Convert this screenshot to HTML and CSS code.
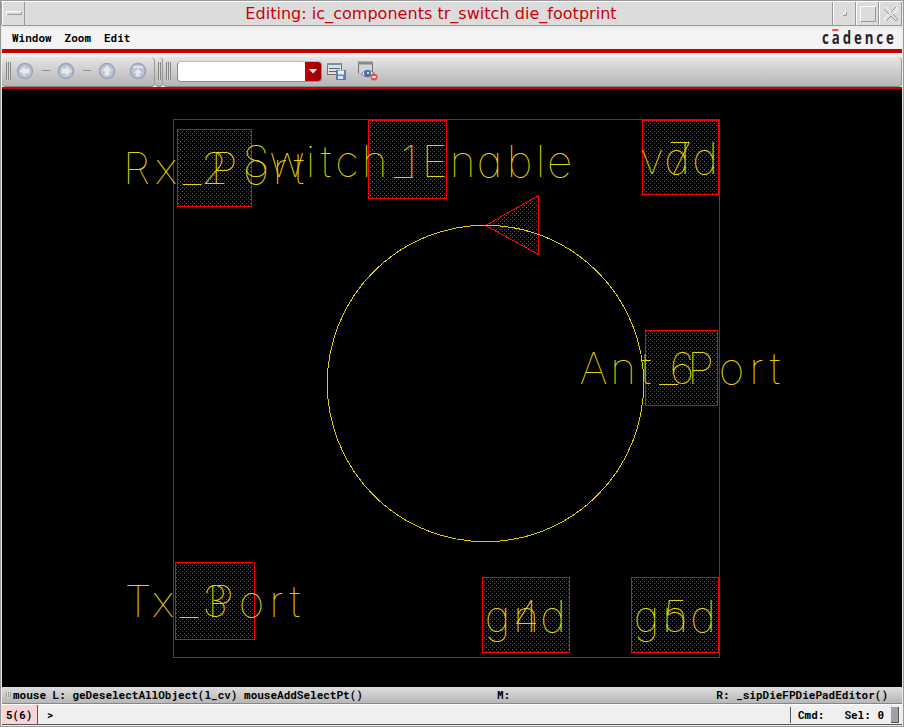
FILE: index.html
```html
<!DOCTYPE html>
<html lang="en">
<head>
<meta charset="utf-8">
<title>Editing: ic_components tr_switch die_footprint</title>
<link rel="stylesheet" href="styles.css">
</head>
<body>
<div class="window">
  <header class="titlebar">
    <div class="wm-btn wm-menu"><svg width="16" height="6"><path class="hi" d="M.5 4V.5H15"/><path class="lo" d="M15.500 1V3.500H1"/></svg></div>
    <h1 class="title">Editing: ic_components tr_switch die_footprint</h1>
    <div class="wm-btn wm-min"><svg width="6" height="6"><path class="hi" d="M1.500 4V1.500H4"/><path class="lo" d="M4.500 1V4.500H1"/></svg></div>
    <div class="wm-btn wm-max"><svg width="16" height="16"><path class="hi" d="M.5 15V.5H15"/><path class="lo" d="M15.500 1V15.500H1"/></svg></div>
    <div class="wm-btn wm-close"><svg width="16" height="16"><path class="hi" d="M3 1L8 6L13 1L15 3L10 8M1 3L6 8L1 13L3 15"/><path class="lo" d="M10 8L15 13L13 15L8 10L3 15M6 8L1 3M8 6L13 1"/></svg></div>
  </header>
  <nav class="menubar">
    <span>Window</span><span>Zoom</span><span>Edit</span>
    <div class="logo">c<span class="macron">a</span>dence</div>
  </nav>
  <div class="toolbar">
    <div class="tools nav-tools">
      <i class="grip"></i>
      <svg class="round" width="18" height="18" viewBox="0 0 18 18"><circle cx="9" cy="9" r="7.500"/><path d="M3.500 9L9 3.500V6.500H13.500V11.500H9V14.500Z"/></svg>
      <i class="dash"></i>
      <svg class="round" width="18" height="18" viewBox="0 0 18 18"><circle cx="9" cy="9" r="7.500"/><path d="M14.500 9L9 3.500V6.500H4.500V11.500H9V14.500Z"/></svg>
      <i class="dash"></i>
      <svg class="round" width="18" height="18" viewBox="0 0 18 18"><circle cx="9" cy="9" r="7.500"/><path d="M9 3.500L14.500 9H11.500V13.500H6.500V9H3.500Z"/></svg>
      <svg class="round top" width="18" height="18" viewBox="0 0 18 18"><circle cx="9" cy="9" r="7.500"/><path d="M4 4H14V6H4Z M9 6.500L13.500 11H11V14.500H7V11H4.500Z"/></svg>
    </div>
    <div class="tools gap-tools"><i class="grip"></i></div>
    <div class="tools main-tools">
      <i class="grip"></i>
      <div class="combo"><span class="field"></span><span class="drop"><svg width="8" height="5"><path d="M0 0H8L4 4.500Z"/></svg></span></div>
      <svg class="icon save" width="21" height="18" viewBox="0 0 21 18">
        <rect x="1.500" y="1.500" width="14" height="11" fill="#e0e0e0" stroke="#737373"/><path d="M1 2H16" stroke="#7394aa" stroke-width="2"/><path d="M3 6.500H14M3 9.500H10" stroke="#666"/>
        <rect x="10.500" y="8.500" width="9" height="9" fill="#6586bd" stroke="#6077a5"/><rect x="12" y="8.500" width="6" height="4" fill="#e8eef7"/><rect x="12" y="14" width="5" height="3" fill="#dce5f2"/>
      </svg>
      <svg class="icon view" width="21" height="20" viewBox="0 0 21 20">
        <path d="M1.500 12.500V1.500H15.500V11" fill="#d4d4d4" stroke="#737373"/><path d="M1 2H16" stroke="#7a8d9f" stroke-width="3"/>
        <path d="M4 13Q10 6 17 12Q10 19 4 13Z" fill="#e3edf6" stroke="#66809f"/><circle cx="10.500" cy="12.500" r="3.500" fill="#4e709e"/><circle cx="11" cy="12" r="1" fill="#fff"/>
        <circle cx="17" cy="16" r="3.500" fill="#d65858"/><path d="M15 16H19" stroke="#fff" stroke-width="1.500"/>
      </svg>
    </div>
  </div>
  <main class="canvas">
    <svg class="drawing" width="900" height="597" viewBox="2 90 900 597">
      <defs>
        <pattern id="dots" width="4" height="4" patternUnits="userSpaceOnUse"><path class="dot" d="M0 1H1V2H0ZM2 3H3V4H2Z"/></pattern>
      </defs>
      <rect class="die" x="173.500" y="119.500" width="546" height="538"/>
      <g class="pad">
        <rect x="177.500" y="129.500" width="74" height="77"/>
        <rect x="368.500" y="120.500" width="78" height="78"/>
        <rect x="642.500" y="120.500" width="76" height="74"/>
        <rect x="645.500" y="330.500" width="72" height="75"/>
        <rect x="175.500" y="562.500" width="79" height="77"/>
        <rect x="482.500" y="577.500" width="87" height="75"/>
        <rect x="631.500" y="577.500" width="87" height="75"/>
        <path d="M485.500 225.500L538.500 195.500V254.500Z"/>
      </g>
      <circle class="ring" cx="485.500" cy="383.500" r="158.200"/>
      <g class="label">
        <text y="184" x="136.500 166 192 224 256 280 299">Rx_Port</text>
        <text y="184" x="214.500">2</text>
        <text y="177" x="256 287 310.500 326 347 374.500 403.500 434.500 462.500 489.500 519.500 540.500 559.500">Switch_Enable</text>
        <text y="177" x="409">1</text>
        <text y="174" x="652 677 705">vdd</text>
        <text y="174" x="680">7</text>
        <text y="384" x="593.500 623 646 668.500 700.500 731.500 756.500 775">Ant_Port</text>
        <text y="384" x="682">6</text>
        <text y="617" x="138 163 189 220.500 251.500 276.500 295">Tx_Port</text>
        <text y="617" x="215">3</text>
        <text y="632" x="497.500 526 553">gnd</text>
        <text y="632" x="526">4</text>
        <text y="632" x="646.500 675 703">gnd</text>
        <text y="632" x="675">5</text>
      </g>
    </svg>
  </main>
  <div class="mousebar">
    <span class="left"><i class="minigrip"></i>mouse L: geDeselectAllObject(l_cv) mouseAddSelectPt()</span>
    <span class="mid">M:</span>
    <span class="right">R: _sipDieFPDiePadEditor()</span>
  </div>
  <footer class="cmdbar">
    <span class="count">5(6)</span><span class="prompt">&gt;</span>
    <span class="status"><span>Cmd:</span><span>Sel: 0</span></span><i class="thumb"></i>
  </footer>
</div>
</body>
</html>
```
FILE: styles.css
```css
* { box-sizing: border-box; }
body { margin: 0; background: #dcdcdc; }
.window {
  width: 904px; height: 727px; display: flex; flex-direction: column;
  border: 1px solid #999; padding: 0 1px 1px;
  background: #ececec; overflow: hidden;
  font: bold 11px/16px "Roboto Mono", "Liberation Mono", monospace; color: #000;
}
.titlebar { height: 25px; flex: none; display: flex; background: #dcdcdc; border-top: 1px solid #fff; border-bottom: 1px solid #999; }
.title { flex: 1; margin: 0; padding-left: 4px; text-align: center; font: 16px/23px "DejaVu Sans", sans-serif; letter-spacing: .03px; color: #c8000a; }
.wm-btn { display: flex; align-items: center; justify-content: center; width: 23px; border-left: 1px solid #fff; border-right: 1px solid #999; box-shadow: -1px 0 #999; }
.wm-btn svg { fill: none; overflow: visible; }
.hi { stroke: #fff; }
.lo { stroke: #999; }
.menubar { height: 23px; flex: none; display: flex; align-items: center; gap: 13px; padding: 1px 6px 0 10px; background: linear-gradient(#e9e9e9, #f3f3f3 5px); }
.logo { margin-left: auto; font: bold 17px/20px "Open Sans", sans-serif; letter-spacing: 3.700px; margin-right: -1px; color: #292526; transform: scaleX(.78); transform-origin: right; }
.macron { position: relative; }
.macron::before { content: ""; position: absolute; left: 1px; top: 3px; width: 8px; height: 2px; background: #e8505a; }
.toolbar { height: 40px; flex: none; display: flex; border-top: 4px solid #c80000; border-bottom: 2px solid #c80000; background: #efefef; padding-top: 4px; }
.tools { display: flex; align-items: center; padding-bottom: 1px; background: linear-gradient(#e5e5e5, #b5b5b5); border-bottom: 1px solid #888; border-right: 1px solid #999; border-radius: 4px; }
.nav-tools { width: 153px; padding-left: 4px; }
.gap-tools { width: 8px; padding-left: 3px; }
.main-tools { flex: 1; padding-left: 3px; }
.grip { width: 5px; height: 18px; background: repeating-linear-gradient(90deg, #888 0 1px, #d8d8d8 1px 2px); }
.gap-tools .grip { width: 3px; }
.round { margin-left: 5px; overflow: visible; }
.round circle { fill: #bac4d3; stroke: #98a4b9; stroke-width: 1.500; }
.round path { fill: #e9e9e9; stroke: #c6ccd4; stroke-width: .5; }
.round.top { margin-left: 13px; }
.dash { width: 8px; height: 2px; margin: 0 0 0 8px; background: #8d8d8d; border-bottom: 1px solid #d0d0d0; }
.dash + .round { margin-left: 7px; }
.combo { display: flex; width: 145px; height: 21px; margin-left: 6px; border: 1px solid #8b8b8b; border-top-color: #b8b8b8; border-radius: 4px; overflow: hidden; background: #fff; }
.field { flex: 1; }
.drop { width: 16px; display: flex; align-items: center; justify-content: center; background: linear-gradient(90deg, #c00000, #980000); }
.drop path { fill: #fff; }
.save { margin-left: 4px; }
.view { margin-left: 10px; }
.canvas { height: 598px; flex: none; background: #000; padding-top: 1px; }
.drawing { display: block; }
.die { fill: none; stroke: #9400d3; shape-rendering: crispEdges; }
.dot { fill: #f01414; shape-rendering: crispEdges; }
.pad { fill: url(#dots); stroke: #f00; shape-rendering: crispEdges; }
.ring { fill: none; stroke: #dccc00; shape-rendering: crispEdges; }
.label { font: 100 44px Inter, sans-serif; font-feature-settings: "cv11"; text-anchor: middle; fill: #e6d600; opacity: .99; }
.mousebar { height: 17px; flex: none; display: flex; padding: 0 14px 0 4px; background: linear-gradient(#ddd, #b7b7b7); border-bottom: 1px solid #888; white-space: pre; }
.left { width: 491px; }
.minigrip { display: inline-block; width: 5px; height: 5px; margin: 0 2px 2px 0; background: repeating-linear-gradient(90deg, #999 0 1px, #ddd 1px 2px); }
.right { margin-left: auto; }
.cmdbar { height: 21px; flex: none; display: flex; align-items: center; background: #efefef; border-top: 1px solid #fff; border-bottom: 1px solid #555; }
.count { width: 36px; height: 100%; line-height: 20px; padding-left: 4px; background: #f7d5d5; border-right: 1px solid #555; }
.prompt { margin-left: 9px; }
.status { margin-left: auto; display: flex; gap: 20px; padding-left: 7px; border-left: 1px solid #555; }
.thumb { width: 8px; height: 16px; margin: 0 3px 0 7px; background: #a0a0a5; border-right: 1px solid #555; border-bottom: 1px solid #555; }
```
